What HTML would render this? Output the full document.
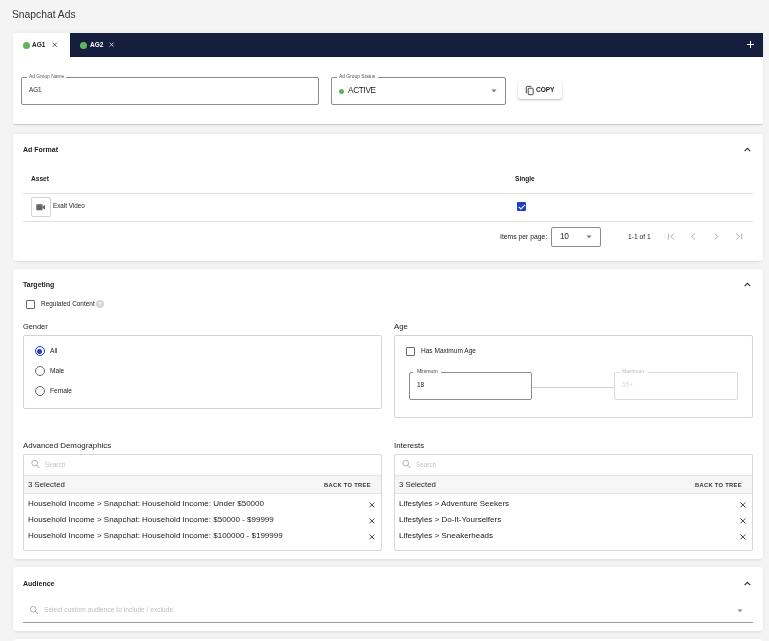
<!DOCTYPE html>
<html><head><meta charset="utf-8"><title>Snapchat Ads</title>
<style>
html,body{margin:0;padding:0;}
body{width:769px;height:641px;overflow:hidden;background:#f4f4f4;position:relative;font-family:"Liberation Sans",sans-serif;}
.a{position:absolute;}
.t{position:absolute;will-change:transform;white-space:nowrap;line-height:1;font-family:"Liberation Sans",sans-serif;}
svg{overflow:visible;}
</style></head><body>
<div class="t" style="left:12.20px;top:10.00px;font-size:10.3px;font-weight:400;color:#333;">Snapchat Ads</div>
<div class="a" style="left:13px;top:33px;width:750px;height:91px;background:#fff;border-radius:0 0 2px 2px;box-shadow:0 2px 4px -2px rgba(0,0,0,0.16),0 -1px 4px -2px rgba(0,0,0,0.10);"></div>
<div class="a" style="left:13px;top:123.6px;width:750px;height:1.0px;background:#cfcfcf;border-radius:0 0 2px 2px;"></div>
<div class="a" style="left:70px;top:33px;width:693px;height:24px;background:#161e3e;"></div>
<div class="a" style="left:22.6px;top:42px;width:7.399999999999999px;height:7.399999999999999px;background:#62b35f;border-radius:50%;"></div>
<div class="t" style="left:32.40px;top:42.00px;font-size:6.5px;font-weight:700;color:#222;">AG1</div>
<svg class="a" style="left:52px;top:42px" width="6" height="6"><path d="M0.7 0.6 L4.9 4.8 M4.9 0.6 L0.7 4.8" stroke="#333" stroke-width="0.8"/></svg>
<div class="a" style="left:79.8px;top:42px;width:7.400000000000006px;height:7.399999999999999px;background:#62b35f;border-radius:50%;"></div>
<div class="t" style="left:90.20px;top:42.00px;font-size:6.5px;font-weight:700;color:#fff;">AG2</div>
<svg class="a" style="left:109.4px;top:42px" width="6" height="6"><path d="M0.6 0.6 L4.6 4.6 M4.6 0.6 L0.6 4.6" stroke="#e8e8e8" stroke-width="0.8"/></svg>
<div class="a" style="left:747px;top:44px;width:7.2000000000000455px;height:1px;background:#fff;"></div>
<div class="a" style="left:750.1px;top:40.8px;width:1.0px;height:7.200000000000003px;background:#fff;"></div>
<div class="a" style="left:21px;top:77px;width:298px;height:28px;border:1px solid #8c8c8c;border-radius:2px;box-sizing:border-box;"></div>
<div class="a" style="left:27px;top:75px;width:39px;height:4px;background:#fff;"></div>
<div class="t" style="left:28.90px;top:75.00px;font-size:4.9px;font-weight:400;color:#555;">Ad Group Name</div>
<div class="t" style="left:28.80px;top:87.00px;font-size:6.4px;font-weight:400;color:#333;letter-spacing:-0.12px;">AG1</div>
<div class="a" style="left:331px;top:77px;width:175px;height:28px;border:1px solid #8c8c8c;border-radius:2px;box-sizing:border-box;"></div>
<div class="a" style="left:337px;top:75px;width:41px;height:4px;background:#fff;"></div>
<div class="t" style="left:339.00px;top:75.00px;font-size:4.9px;font-weight:400;color:#555;">Ad Group Status</div>
<div class="a" style="left:339px;top:88.8px;width:5px;height:5.0px;background:#62b35f;border-radius:50%;"></div>
<div class="t" style="left:348.30px;top:87.00px;font-size:8.2px;font-weight:400;color:#222;letter-spacing:-0.3px;">ACTIVE</div>
<svg class="a" style="left:489.5px;top:88px" width="8" height="6"><path d="M1.5 1.5 L6.5 1.5 L4 4.3 Z" fill="#757575"/></svg>
<div class="a" style="left:518px;top:81px;width:44px;height:18px;background:#fff;border-radius:2px;box-shadow:0 1px 2px rgba(0,0,0,0.25),0 0 1px rgba(0,0,0,0.15);"></div>
<svg class="a" style="left:525px;top:85px" width="10" height="11"><path d="M1.3 8.2 V2.2 Q1.3 1.3 2.2 1.3 H6.3" fill="none" stroke="#333" stroke-width="0.9"/><rect x="3.2" y="3.2" width="5" height="6.5" rx="0.8" fill="none" stroke="#333" stroke-width="0.9"/></svg>
<div class="t" style="left:535.90px;top:87.00px;font-size:6.6px;font-weight:700;color:#222;letter-spacing:-0.1px;">COPY</div>
<div class="a" style="left:13px;top:134px;width:750px;height:127px;background:#fff;border-radius:4px;box-shadow:0 2px 4px -2px rgba(0,0,0,0.16),0 -1px 4px -2px rgba(0,0,0,0.10);"></div>
<div class="t" style="left:22.60px;top:146.00px;font-size:7.0px;font-weight:700;color:#222;">Ad Format</div>
<svg class="a" style="left:743px;top:146px" width="9" height="7"><path d="M1.6 5.1 L4.4 2.4 L7.2 5.1" fill="none" stroke="#333" stroke-width="1.2"/></svg>
<div class="t" style="left:30.50px;top:176.00px;font-size:6.6px;font-weight:700;color:#222;">Asset</div>
<div class="t" style="left:515.00px;top:176.00px;font-size:6.6px;font-weight:700;color:#222;">Single</div>
<div class="a" style="left:23px;top:193px;width:730px;height:1px;background:#e0e0e0;"></div>
<div class="a" style="left:31px;top:197px;width:20px;height:20px;border:1px solid #d4d4d4;border-radius:2px;box-sizing:border-box;"></div>
<svg class="a" style="left:35px;top:203px" width="12" height="9"><rect x="1.3" y="1.2" width="6.2" height="6" rx="0.6" fill="#666"/><path d="M7.5 3.6 L10 2 V6.6 L7.5 5 Z" fill="#666"/></svg>
<div class="t" style="left:52.70px;top:203.00px;font-size:6.3px;font-weight:400;color:#222;">Exalt Video</div>
<div class="a" style="left:516.5px;top:201.5px;width:9.5px;height:9.5px;background:#1d3fc4;border-radius:1px;"></div>
<svg class="a" style="left:516.5px;top:201.5px" width="10" height="10"><path d="M1.7 4.8 L3.9 6.9 L8.1 2.8" fill="none" stroke="#fff" stroke-width="1.15"/></svg>
<div class="a" style="left:23px;top:221px;width:730px;height:1px;background:#e0e0e0;"></div>
<div class="t" style="left:499.50px;top:234.00px;font-size:6.8px;font-weight:400;color:#222;">Items per page:</div>
<div class="a" style="left:551px;top:227px;width:50px;height:20px;border:1px solid #8c8c8c;border-radius:2px;box-sizing:border-box;"></div>
<div class="t" style="left:559.50px;top:232.00px;font-size:8.4px;font-weight:400;color:#333;letter-spacing:-0.3px;">10</div>
<svg class="a" style="left:585px;top:234px" width="8" height="6"><path d="M1.5 1.5 L6.5 1.5 L4 4.3 Z" fill="#757575"/></svg>
<div class="t" style="left:628.00px;top:234.00px;font-size:6.7px;font-weight:400;color:#222;">1-1 of 1</div>
<svg class="a" style="left:666px;top:232px" width="80" height="10"><g fill="none" stroke="#b0b0b0" stroke-width="0.95"><path d="M2.4 1.5 V7.5"/><path d="M7.9 1.5 L4.5 4.5 L7.9 7.5"/><path d="M29 1.5 L25.6 4.5 L29 7.5"/><path d="M48.6 1.5 L52 4.5 L48.6 7.5"/><path d="M70.1 1.5 L73.5 4.5 L70.1 7.5"/><path d="M75.6 1.5 V7.5"/></g></svg>
<div class="a" style="left:13px;top:269px;width:750px;height:290px;background:#fff;border-radius:4px;box-shadow:0 2px 4px -2px rgba(0,0,0,0.16),0 -1px 4px -2px rgba(0,0,0,0.10);"></div>
<div class="t" style="left:22.60px;top:281.00px;font-size:7.0px;font-weight:700;color:#222;">Targeting</div>
<svg class="a" style="left:743px;top:281px" width="9" height="7"><path d="M1.6 5.1 L4.4 2.4 L7.2 5.1" fill="none" stroke="#333" stroke-width="1.2"/></svg>
<div class="a" style="left:26px;top:300px;width:9px;height:9px;border:1px solid #6a6a6a;border-radius:1px;box-sizing:border-box;"></div>
<div class="t" style="left:40.60px;top:301.00px;font-size:6.45px;font-weight:400;color:#222;">Regulated Content</div>
<div class="a" style="left:96px;top:299.9px;width:8px;height:8.0px;background:#d6d6d6;border-radius:50%;"></div>
<div class="t" style="left:98.30px;top:302.00px;font-size:5.8px;font-weight:700;color:#fff;">?</div>
<div class="t" style="left:22.60px;top:323.00px;font-size:7.4px;font-weight:400;color:#222;">Gender</div>
<div class="t" style="left:393.80px;top:323.00px;font-size:7.8px;font-weight:400;color:#222;">Age</div>
<div class="a" style="left:23px;top:335px;width:359px;height:74px;border:1px solid #d4d4d4;border-radius:2px;box-sizing:border-box;"></div>
<div class="a" style="left:34.6px;top:346.3px;width:10.0px;height:10.0px;border:1.3px solid #1d3fc4;border-radius:50%;box-sizing:border-box;"></div>
<div class="a" style="left:37.1px;top:348.8px;width:5.0px;height:5.0px;background:#1d3fc4;border-radius:50%;"></div>
<div class="a" style="left:34.6px;top:366.4px;width:10.0px;height:10.0px;border:1px solid #666;border-radius:50%;box-sizing:border-box;"></div>
<div class="a" style="left:34.6px;top:386.3px;width:10.0px;height:10.0px;border:1px solid #666;border-radius:50%;box-sizing:border-box;"></div>
<div class="t" style="left:49.60px;top:348.00px;font-size:6.6px;font-weight:400;color:#222;">All</div>
<div class="t" style="left:49.60px;top:368.00px;font-size:6.6px;font-weight:400;color:#222;">Male</div>
<div class="t" style="left:49.60px;top:388.00px;font-size:6.6px;font-weight:400;color:#222;">Female</div>
<div class="a" style="left:394px;top:335px;width:359px;height:83px;border:1px solid #d4d4d4;border-radius:2px;box-sizing:border-box;"></div>
<div class="a" style="left:406px;top:347px;width:9px;height:9px;border:1px solid #6a6a6a;border-radius:1px;box-sizing:border-box;"></div>
<div class="t" style="left:420.80px;top:348.00px;font-size:6.55px;font-weight:400;color:#222;">Has Maximum Age</div>
<div class="a" style="left:531px;top:387px;width:84px;height:1px;background:#d0d0d0;"></div>
<div class="a" style="left:409px;top:372px;width:123px;height:28px;border:1px solid #8c8c8c;border-radius:2px;box-sizing:border-box;"></div>
<div class="a" style="left:413px;top:370px;width:28px;height:4px;background:#fff;"></div>
<div class="t" style="left:416.50px;top:369.00px;font-size:5.1px;font-weight:400;color:#444;">Minimum</div>
<div class="t" style="left:416.80px;top:382.00px;font-size:6.5px;font-weight:400;color:#222;">18</div>
<div class="a" style="left:614px;top:372px;width:124px;height:28px;border:1px solid #dadada;border-radius:2px;box-sizing:border-box;"></div>
<div class="a" style="left:619px;top:370px;width:29px;height:4px;background:#fff;"></div>
<div class="t" style="left:621.80px;top:369.00px;font-size:5.1px;font-weight:400;color:#bbb;">Maximum</div>
<div class="t" style="left:622.40px;top:382.00px;font-size:6.5px;font-weight:400;color:#dcdcdc;">55+</div>
<div class="t" style="left:22.50px;top:442.00px;font-size:7.9px;font-weight:400;color:#222;">Advanced Demographics</div>
<div class="a" style="left:22.9px;top:454px;width:359.1px;height:97px;border:1px solid #d8d8d8;border-radius:2px;box-sizing:border-box;"></div>
<svg class="a" style="left:30.5px;top:460px" width="10" height="10"><circle cx="3.7" cy="3.1" r="2.85" fill="none" stroke="#a8a8a8" stroke-width="0.9"/><path d="M5.8 5.2 L8.5 8" stroke="#a8a8a8" stroke-width="1"/></svg>
<div class="t" style="left:44.50px;top:462.00px;font-size:6.4px;font-weight:400;color:#c4c4c4;">Search</div>
<div class="a" style="left:23.9px;top:475px;width:357.1px;height:19px;background:#f6f6f6;border-top:1px solid #e6e6e6;border-bottom:1px solid #e6e6e6;box-sizing:border-box;"></div>
<div class="t" style="left:27.70px;top:481.00px;font-size:7.8px;font-weight:400;color:#222;">3 Selected</div>
<div class="t" style="left:324.40px;top:483.00px;font-size:5.75px;font-weight:700;color:#333;letter-spacing:0.32px;">BACK TO TREE</div>
<div class="t" style="left:27.90px;top:500.00px;font-size:8.0px;font-weight:400;color:#222;">Household Income &gt; Snapchat: Household Income: Under $50000</div>
<svg class="a" style="left:367.5px;top:500.7px" width="8" height="8"><path d="M1.4 1.4 L6.4 6.4 M6.4 1.4 L1.4 6.4" stroke="#333" stroke-width="0.9"/></svg>
<div class="t" style="left:27.90px;top:516.00px;font-size:8.0px;font-weight:400;color:#222;">Household Income &gt; Snapchat: Household Income: $50000 - $99999</div>
<svg class="a" style="left:367.5px;top:516.6px" width="8" height="8"><path d="M1.4 1.4 L6.4 6.4 M6.4 1.4 L1.4 6.4" stroke="#333" stroke-width="0.9"/></svg>
<div class="t" style="left:27.90px;top:532.00px;font-size:8.0px;font-weight:400;color:#222;">Household Income &gt; Snapchat: Household Income: $100000 - $199999</div>
<svg class="a" style="left:367.5px;top:532.5px" width="8" height="8"><path d="M1.4 1.4 L6.4 6.4 M6.4 1.4 L1.4 6.4" stroke="#333" stroke-width="0.9"/></svg>
<div class="t" style="left:393.50px;top:442.00px;font-size:7.9px;font-weight:400;color:#222;">Interests</div>
<div class="a" style="left:393.9px;top:454px;width:359.1px;height:97px;border:1px solid #d8d8d8;border-radius:2px;box-sizing:border-box;"></div>
<svg class="a" style="left:401.5px;top:460px" width="10" height="10"><circle cx="3.7" cy="3.1" r="2.85" fill="none" stroke="#a8a8a8" stroke-width="0.9"/><path d="M5.8 5.2 L8.5 8" stroke="#a8a8a8" stroke-width="1"/></svg>
<div class="t" style="left:415.50px;top:462.00px;font-size:6.4px;font-weight:400;color:#c4c4c4;">Search</div>
<div class="a" style="left:394.9px;top:475px;width:357.1px;height:19px;background:#f6f6f6;border-top:1px solid #e6e6e6;border-bottom:1px solid #e6e6e6;box-sizing:border-box;"></div>
<div class="t" style="left:398.70px;top:481.00px;font-size:7.8px;font-weight:400;color:#222;">3 Selected</div>
<div class="t" style="left:695.40px;top:483.00px;font-size:5.75px;font-weight:700;color:#333;letter-spacing:0.32px;">BACK TO TREE</div>
<div class="t" style="left:398.90px;top:500.00px;font-size:8.0px;font-weight:400;color:#222;">Lifestyles &gt; Adventure Seekers</div>
<svg class="a" style="left:738.5px;top:500.7px" width="8" height="8"><path d="M1.4 1.4 L6.4 6.4 M6.4 1.4 L1.4 6.4" stroke="#333" stroke-width="0.9"/></svg>
<div class="t" style="left:398.90px;top:516.00px;font-size:8.0px;font-weight:400;color:#222;">Lifestyles &gt; Do-It-Yourselfers</div>
<svg class="a" style="left:738.5px;top:516.6px" width="8" height="8"><path d="M1.4 1.4 L6.4 6.4 M6.4 1.4 L1.4 6.4" stroke="#333" stroke-width="0.9"/></svg>
<div class="t" style="left:398.90px;top:532.00px;font-size:8.0px;font-weight:400;color:#222;">Lifestyles &gt; Sneakerheads</div>
<svg class="a" style="left:738.5px;top:532.5px" width="8" height="8"><path d="M1.4 1.4 L6.4 6.4 M6.4 1.4 L1.4 6.4" stroke="#333" stroke-width="0.9"/></svg>
<div class="a" style="left:13px;top:567px;width:750px;height:64px;background:#fff;border-radius:4px;box-shadow:0 2px 4px -2px rgba(0,0,0,0.16),0 -1px 4px -2px rgba(0,0,0,0.10);"></div>
<div class="t" style="left:22.60px;top:580.00px;font-size:7.0px;font-weight:700;color:#222;">Audience</div>
<svg class="a" style="left:743px;top:580px" width="9" height="7"><path d="M1.6 5.1 L4.4 2.4 L7.2 5.1" fill="none" stroke="#333" stroke-width="1.2"/></svg>
<svg class="a" style="left:29px;top:605px" width="11" height="11"><circle cx="4.2" cy="4.2" r="2.85" fill="none" stroke="#a8a8a8" stroke-width="0.9"/><path d="M6.3 6.3 L8.9 8.9" stroke="#a8a8a8" stroke-width="1"/></svg>
<div class="t" style="left:43.60px;top:607.00px;font-size:6.65px;font-weight:400;color:#bdbdbd;">Select custom audience to include / exclude</div>
<svg class="a" style="left:736.4px;top:607.8px" width="8" height="6"><path d="M1.5 1.5 L6.5 1.5 L4 4.3 Z" fill="#888"/></svg>
<div class="a" style="left:23px;top:622px;width:730px;height:1px;background:#9a9a9a;"></div>
<div class="a" style="left:13px;top:639px;width:750px;height:61px;background:#fff;border-radius:4px;box-shadow:0 2px 4px -2px rgba(0,0,0,0.16),0 -1px 4px -2px rgba(0,0,0,0.10);"></div>
</body></html>
